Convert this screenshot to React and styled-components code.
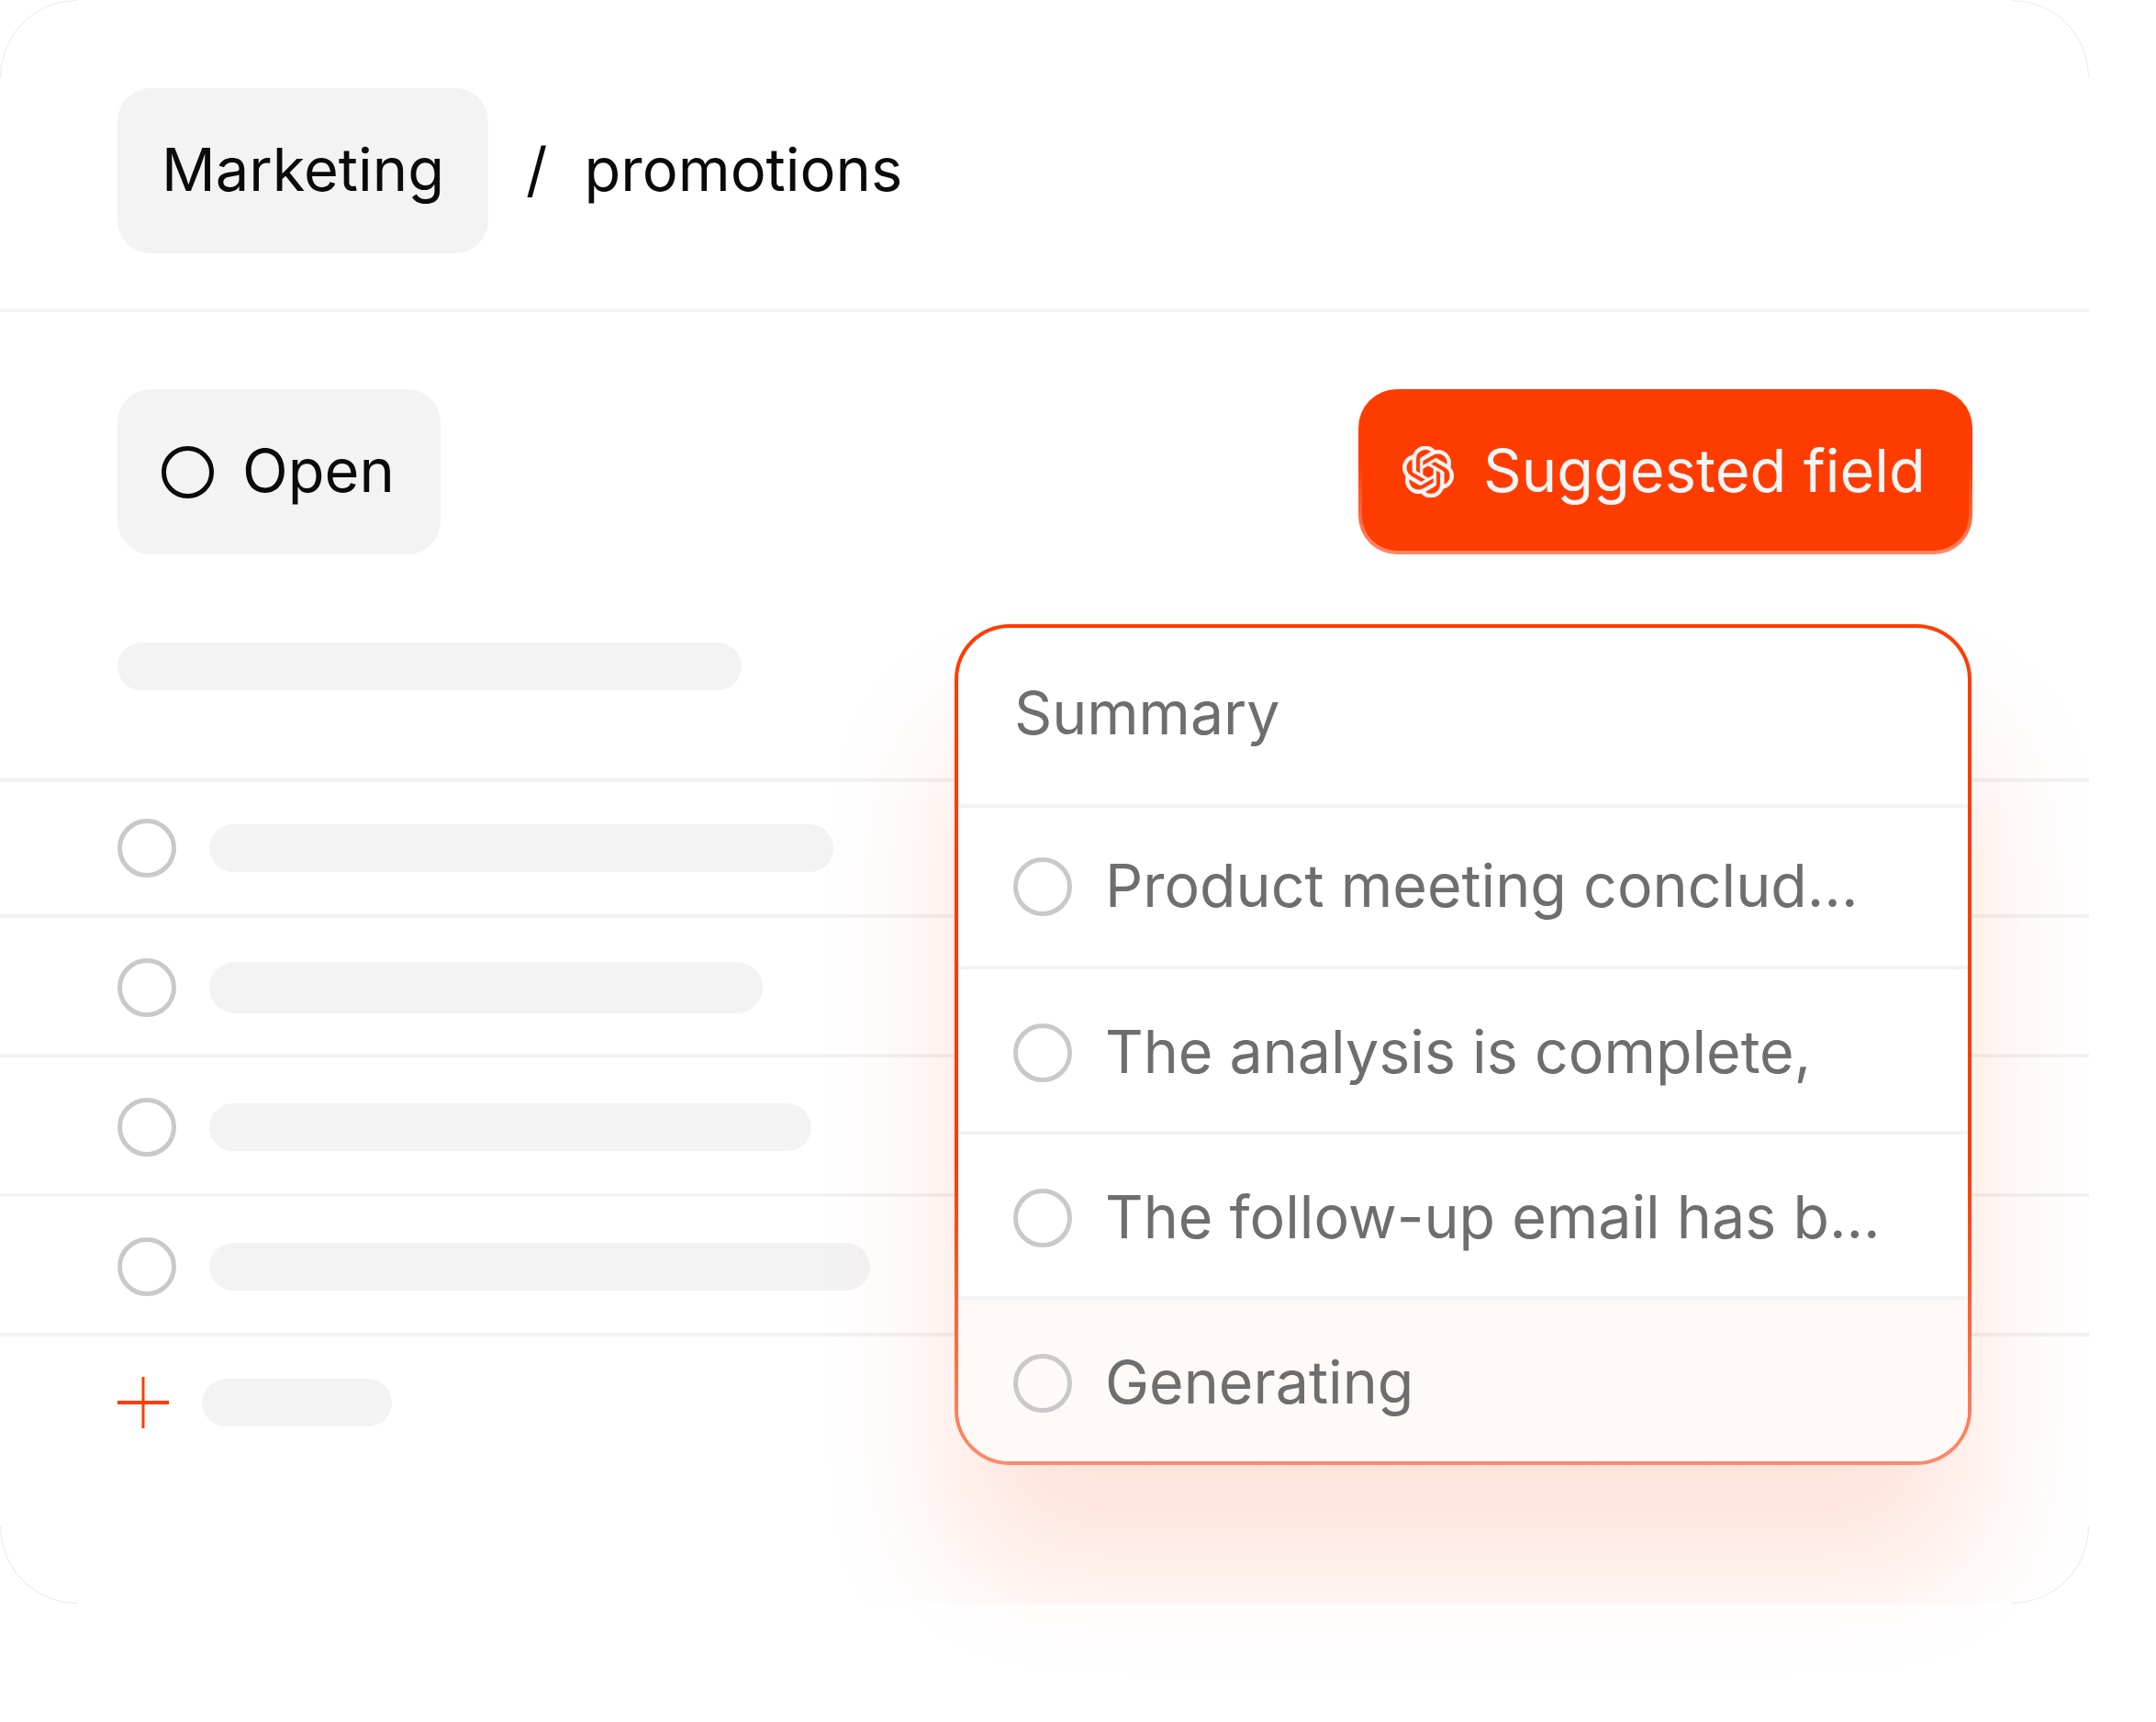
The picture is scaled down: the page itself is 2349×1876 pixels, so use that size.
import React from "react";
import styled, { createGlobalStyle } from "styled-components";
import { SiOpenai } from "react-icons/si";

const GlobalStyle = createGlobalStyle`
  html, body {
    margin: 0;
    padding: 0;
    background: #fff;
  }
`;

const Page = styled.div`
  position: relative;
  width: 2349px;
  height: 1876px;
  overflow: hidden;
  background: #fff;
  font-family: Inter, "Noto Sans", sans-serif;
`;

const Card = styled.div`
  position: relative;
  width: 2276px;
  height: 1747px;
  border-radius: 84px;
  overflow: hidden;
  background: #fff;
`;

const Corner = styled.span`
  position: absolute;
  width: 84px;
  height: 84px;
  box-sizing: border-box;
  ${(p) => p.$y}: 0;
  ${(p) => p.$x}: 0;
  border-${(p) => p.$y}: 1px solid rgba(120, 100, 100, 0.16);
  border-${(p) => p.$x}: 1px solid rgba(120, 100, 100, 0.16);
  border-${(p) => p.$y}-${(p) => p.$x}-radius: 84px;
`;

const Breadcrumb = styled.div`
  display: flex;
  align-items: center;
  height: 340px;
  padding: 96px 128px 60px;
  box-sizing: border-box;
  border-bottom: 4px solid #f3f3f3;
  font-size: 65px;
  color: #0a0a0a;
`;

const Label = styled.span`
  margin-bottom: 3px;
`;

const Chip = styled.div`
  display: flex;
  align-items: center;
  height: 180px;
  padding: 0 48px;
  box-sizing: border-box;
  border-radius: 36px;
  background: #f3f3f3;
`;

const Slash = styled(Label)`
  margin-left: 41px;
  margin-right: 40px;
`;

const Toolbar = styled.div`
  display: flex;
  align-items: center;
  justify-content: space-between;
  padding: 84px 127px 0 128px;
`;

const OpenDot = styled.span`
  width: 57px;
  height: 57px;
  box-sizing: border-box;
  border-radius: 50%;
  border: 5px solid #0a0a0a;
`;

const OpenChip = styled(Chip)`
  gap: 31px;
  padding: 0 50px 0 48px;
  font-size: 65px;
  color: #0a0a0a;
`;

const SuggestButton = styled.div`
  display: flex;
  align-items: center;
  gap: 32px;
  width: 669px;
  height: 180px;
  padding-left: 44px;
  box-sizing: border-box;
  border: 4px solid transparent;
  border-radius: 42px;
  background: linear-gradient(#ff3c00, #ff3c00) padding-box,
    linear-gradient(#ff3c00 45%, #ff8a6b 100%) border-box;
  color: #f5f5f5;
  font-size: 65px;
`;

const OpenAiMark = styled(SiOpenai)`
  flex: none;
  stroke: currentColor;
  stroke-width: 0.35;
`;

const TitleBar = styled.div`
  width: 680px;
  height: 52px;
  margin: 96px 0 96px 128px;
  border-radius: 26px;
  background: #f3f3f3;
`;

const TaskRow = styled.div`
  display: flex;
  align-items: center;
  gap: 36px;
  height: ${(p) => (p.$first ? 148 : 152)}px;
  padding: ${(p) => (p.$first ? 0 : 4)}px 0 0 128px;
  box-sizing: border-box;
  border-top: 4px solid #f3f3f3;
`;

const AddRow = styled.div`
  display: flex;
  align-items: center;
  gap: 36px;
  padding: 44px 0 0 128px;
  border-top: 4px solid #f3f3f3;
`;

const Ring = styled.span`
  flex: none;
  width: 64px;
  height: 64px;
  box-sizing: border-box;
  border-radius: 50%;
  border: 5px solid #c9c9c9;
`;

const Bar = styled.div`
  width: ${(p) => p.$w}px;
  height: ${(p) => p.$h || 52}px;
  border-radius: 28px;
  background: #f3f3f3;
`;

const Popup = styled.div`
  position: absolute;
  left: 1040px;
  top: 680px;
  width: 1108px;
  height: 916px;
  box-sizing: border-box;
  border: 4px solid transparent;
  border-radius: 60px;
  background: linear-gradient(#fff, #fff) padding-box,
    linear-gradient(#ff3c00 65%, #ff8a6b 100%) border-box;
  box-shadow: ${(p) => p.$shadow};
  overflow: hidden;
`;

const PopupHeader = styled.div`
  display: flex;
  align-items: center;
  height: 192px;
  padding: 0 0 7px 61px;
  box-sizing: border-box;
  font-size: 64.3px;
  color: #6e6e6e;
`;

const PopupRow = styled.div`
  display: flex;
  align-items: center;
  gap: 36px;
  height: ${(p) => (p.$first ? 176 : 180)}px;
  box-sizing: border-box;
  padding: ${(p) => (p.$first ? 0 : 6)}px 0 0 60px;
  border-top: 4px solid #f3f3f3;
  font-size: 64.5px;
  color: #6e6e6e;
  white-space: nowrap;
  background: ${(p) => (p.$tinted ? "#fffaf7" : "transparent")};
`;

const bars = [{ w: 680 }, { w: 603, h: 56 }, { w: 656 }, { w: 720 }];

const items = [
  "Product meeting conclud...",
  "The analysis is complete,",
  "The follow-up email has b...",
  "Generating",
];

export default function App() {
  return (
    <Page>
      <GlobalStyle />
      <Popup $shadow="0 120px 150px rgba(255, 60, 0, 0.06)" />
      <Card>
        <Breadcrumb>
          <Chip>
            <Label>Marketing</Label>
          </Chip>
          <Slash>/</Slash>
          <Label>promotions</Label>
        </Breadcrumb>
        <Toolbar>
          <OpenChip>
            <OpenDot />
            <Label>Open</Label>
          </OpenChip>
          <SuggestButton>
            <OpenAiMark size={56} />
            <Label>Suggested field</Label>
          </SuggestButton>
        </Toolbar>
        <TitleBar />
        {bars.map((b, i) => (
          <TaskRow key={b.w} $first={i === 0}>
            <Ring />
            <Bar $w={b.w} $h={b.h} />
          </TaskRow>
        ))}
        <AddRow>
          <svg width="56" height="56" viewBox="0 0 56 56">
            <path d="M28 0V56" stroke="#ff3c00" strokeWidth="3" />
            <path d="M0 28H56" stroke="#ff3c00" strokeWidth="4" />
          </svg>
          <Bar $w={207} />
        </AddRow>
        <Popup $shadow="0 120px 150px rgba(255, 60, 0, 0.15)">
          <PopupHeader>Summary</PopupHeader>
          {items.map((text, i) => (
            <PopupRow key={text} $first={i === 0} $tinted={i === 3}>
              <Ring />
              <Label>{text}</Label>
            </PopupRow>
          ))}
        </Popup>
        <Corner $y="top" $x="left" />
        <Corner $y="top" $x="right" />
        <Corner $y="bottom" $x="left" />
        <Corner $y="bottom" $x="right" />
      </Card>
    </Page>
  );
}
